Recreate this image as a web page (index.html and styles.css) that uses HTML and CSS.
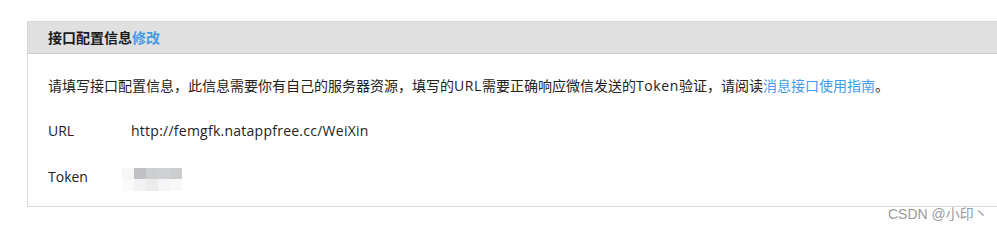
FILE: index.html
```html
<!DOCTYPE html>
<html lang="zh-CN">
<head>
<meta charset="utf-8">
<title>接口配置信息</title>
<link rel="stylesheet" href="styles.css">
</head>
<body>
<div class="card">
  <div class="card-header">接口配置信息<a class="link" href="#">修改</a></div>
  <div class="card-body">
    <p class="desc">请填写接口配置信息，此信息需要你有自己的服务器资源，填写的<span class="latin">URL</span>需要正确响应微信发送的<span class="latin">Token</span>验证，请阅读<a class="link" href="#">消息接口使用指南</a>。</p>
    <div class="row row-url">
      <span class="label">URL</span>
      <span class="value">http://femgfk.natappfree.cc/WeiXin</span>
    </div>
    <div class="row row-token">
      <span class="label">Token</span>
      <span class="blur">
        <i class="c1"></i><i class="c2"></i><i class="c3"></i><i class="c4"></i><i class="c5"></i>
        <i class="d1"></i><i class="d2"></i><i class="d3"></i><i class="d4"></i><i class="d5"></i>
      </span>
    </div>
  </div>
</div>
<div class="watermark">CSDN @小印丶</div>
</body>
</html>
```

FILE: styles.css
```css
html, body {
  margin: 0;
  padding: 0;
  background: #ffffff;
}

body {
  padding: 21px 0 0 27px;
  font-family: "Open Sans", "Noto Sans CJK SC", sans-serif;
  font-size: 14px;
  color: #222222;
  overflow: hidden;
  position: relative;
  height: 232px;
  box-sizing: border-box;
}

.card {
  width: 990px;
  border: 1px solid #d8d8d8;
  background: #ffffff;
}

.card-header {
  height: 31px;
  line-height: 31px;
  background: #e0e0e0;
  border-bottom: 1px solid #cdcdcd;
  padding-left: 20px;
  font-weight: bold;
  color: #1a1a1a;
}

.link {
  color: #459ae9;
  text-decoration: none;
}

.card-body {
  padding: 22px 0 19px 20px;
}

.desc {
  margin: 0;
  line-height: 20px;
  white-space: nowrap;
}

.latin {
  letter-spacing: 0.6px;
}

.row {
  display: flex;
  align-items: center;
  height: 20px;
  line-height: 20px;
}

.row-url {
  margin-top: 25px;
}

.row-token {
  margin-top: 26px;
}

.label {
  width: 83px;
  flex: none;
}

.value {
  letter-spacing: 0.25px;
}

.blur {
  align-self: flex-start;
  margin-top: 1px;
  margin-left: -9px;
  display: grid;
  grid-template-columns: repeat(5, 12px);
  grid-template-rows: 11px 12px;
}

.blur i { display: block; }
.c1 { background: #f7f6f4; }
.c2 { background: #c1c0c5; }
.c3 { background: #cdd0d3; }
.c4 { background: #cfd1d4; }
.c5 { background: #cccdcf; }
.d1 { background: #fafafa; }
.d2 { background: #f2f2f4; }
.d3 { background: #ececec; }
.d4 { background: #f5f5f8; }
.d5 { background: #f8f8f8; }

.watermark {
  position: absolute;
  left: 888px;
  top: 205px;
  line-height: 18px;
  font-family: "Liberation Sans", "Noto Sans CJK SC", sans-serif;
  font-size: 14px;
  color: #9a9a9a;
  white-space: nowrap;
}
```
